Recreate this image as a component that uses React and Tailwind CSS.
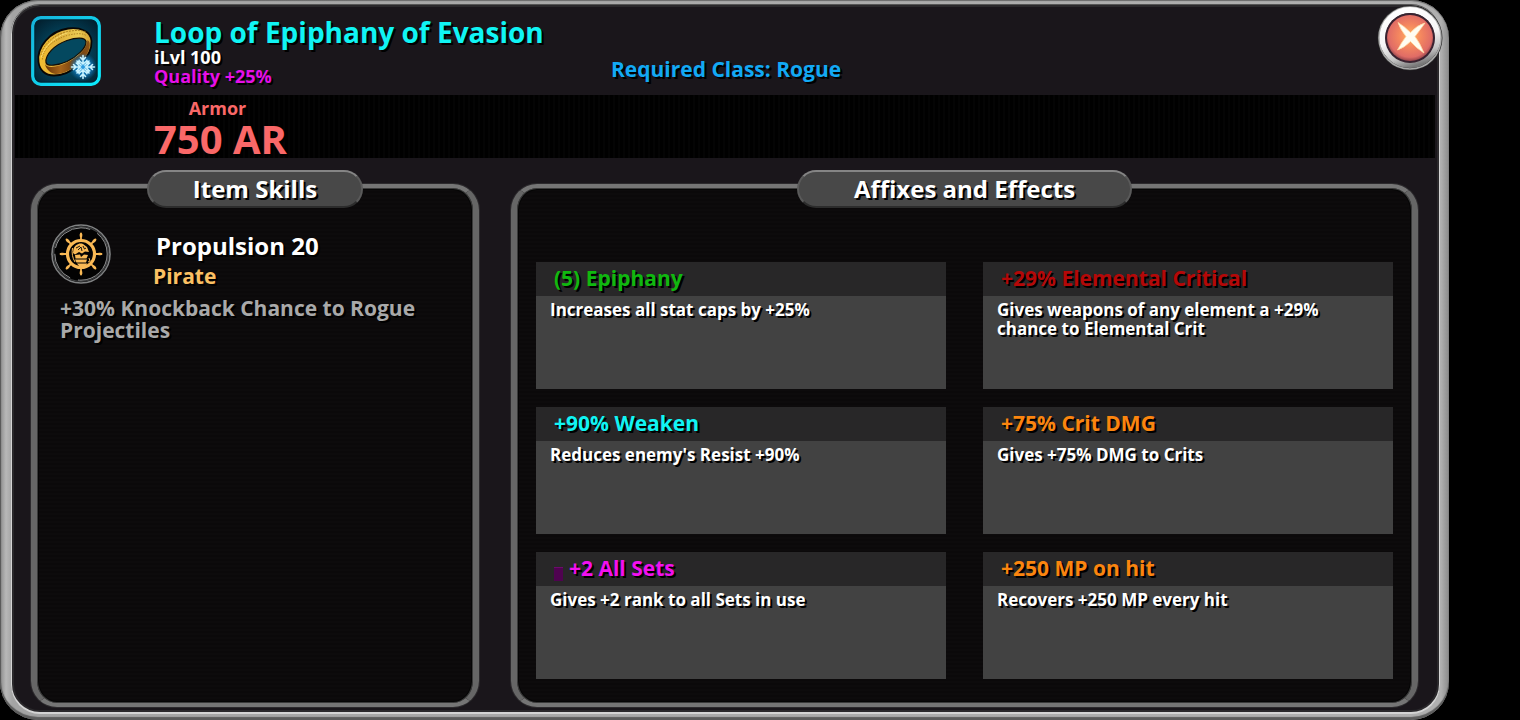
import clsx from 'clsx'

const AFFIXES = [
  { title: '(5) Epiphany', text: 'Increases all stat caps by +25%', color: 'text-[#10b810]' },
  { title: '+29% Elemental Critical', text: 'Gives weapons of any element a +29% chance to Elemental Crit', color: 'text-[#b40808]' },
  { title: '+90% Weaken', text: "Reduces enemy's Resist +90%", color: 'text-[#10f4f4]' },
  { title: '+75% Crit DMG', text: 'Gives +75% DMG to Crits', color: 'text-[#fb850f]' },
  { title: '+2 All Sets', text: 'Gives +2 rank to all Sets in use', color: 'text-[#f310f0]', marker: true },
  { title: '+250 MP on hit', text: 'Recovers +250 MP every hit', color: 'text-[#fb850f]' },
]

function RingIcon() {
  return (
    <svg viewBox="0 0 70 70" className="w-[70px] h-[70px]" role="img" aria-label="Ring">
      <defs>
        <radialGradient id="tile" cx="50%" cy="55%" r="65%">
          <stop offset="0" stopColor="#045a72" />
          <stop offset="0.6" stopColor="#033a50" />
          <stop offset="1" stopColor="#02202f" />
        </radialGradient>
        <linearGradient id="edge" x1="0" y1="0" x2="1" y2="1">
          <stop offset="0" stopColor="#16b4dc" />
          <stop offset="0.5" stopColor="#10cdea" />
          <stop offset="1" stopColor="#0cecff" />
        </linearGradient>
        <linearGradient id="gold" x1="0" y1="0" x2="1" y2="0">
          <stop offset="0" stopColor="#f4be30" />
          <stop offset="0.4" stopColor="#deb03a" />
          <stop offset="0.75" stopColor="#edcc54" />
          <stop offset="1" stopColor="#cf9d30" />
        </linearGradient>
        <linearGradient id="inner" x1="0" y1="0" x2="1" y2="0">
          <stop offset="0" stopColor="#6b3507" />
          <stop offset="0.35" stopColor="#a5641a" />
          <stop offset="0.7" stopColor="#6b3a0b" />
          <stop offset="1" stopColor="#8d5418" />
        </linearGradient>
        <radialGradient id="frost">
          <stop offset="0" stopColor="#2ba6ee" />
          <stop offset="0.6" stopColor="#1a86cf" stopOpacity="0.7" />
          <stop offset="1" stopColor="#0d6fb0" stopOpacity="0" />
        </radialGradient>
      </defs>
      <rect x="1.8" y="1.8" width="66.4" height="66.4" rx="8" fill="url(#tile)" stroke="url(#edge)" strokeWidth="3.4" />
      <rect x="4" y="4" width="62" height="62" rx="6" fill="none" stroke="#012433" strokeWidth="1" />
      {/* band: outer face, inner face, hole */}
      <path d="M7.500 46C5.500 31 19 15 37 12.500C49 11 60 15 60.500 25C61 33 57 41 49 48C40 56 32 59.500 23 59.500C14 59.500 8.500 54 7.500 46Z" fill="url(#gold)" stroke="#090604" strokeWidth="1.800" />
      <path d="M14 48C16 53 28 51 37 46C47 41 56 33 56.500 24C61 26 59 37 51 44.500C42 53 34 57.500 25 58C21 58 15 54 14 48Z" fill="url(#inner)" />
      <path d="M15 46.500C14 39 23 29 36 24.500C45 21.500 54 21 55 25.500C55.500 32 46 40.500 36 45.500C27 49.500 16 51 15 46.500Z" fill="#04485f" stroke="#120b05" strokeWidth="1.200" />
      <g fill="none" strokeLinecap="round">
        <path d="M11.500 43C12 33 22 24 36 19.500C46 17 52 17 56 20" stroke="#a87b1c" strokeWidth="1" strokeDasharray="0.500 2.200" />
        <path d="M10 39C12 28 24 18 37 15.500C44 14 51 14 55 16" stroke="#a87b1c" strokeWidth="1" strokeDasharray="1 2" />
        <path d="M10.500 41C13 31 23 21 36 17" stroke="#fbe27c" strokeWidth="1" strokeDasharray="2 1.500" />
      </g>
      <circle cx="52" cy="51" r="14" fill="url(#frost)" />
      <g stroke="#c9f3ff" strokeWidth="1.600" strokeLinecap="round" fill="none">
        {[0, 45, 90, 135, 180, 225, 270, 315].map((angle) => (
          <path
            key={angle}
            transform={`rotate(${angle} 52 51)`}
            d={angle % 90 === 0 ? 'M52 51V39.500M49.500 41.500L52 44L54.500 41.500M49 45.500L52 48L55 45.500' : 'M52 51V42.500M50 43.500L52 45.500L54 43.500'}
          />
        ))}
      </g>
      <circle cx="52" cy="51" r="2" fill="#2b9be0" />
    </svg>
  )
}

function HelmIcon() {
  return (
    <svg viewBox="0 0 60 60" className="w-[60px] h-[60px]" role="img" aria-label="Pirate">
      <circle cx="30" cy="30" r="29" fill="#030303" stroke="#808283" strokeWidth="1.600" />
      <circle cx="30" cy="30" r="27.400" fill="none" stroke="#3c3d3e" strokeWidth="1.400" />
      <circle cx="30" cy="30" r="26.200" fill="none" stroke="#a0a2a3" strokeWidth="0.900" strokeDasharray="44 8 30 6" />
      <g stroke="#f9b955" fill="none">
        <circle cx="30" cy="30" r="13.500" strokeWidth="3.200" />
        {[0, 45, 90, 135, 180, 225, 270, 315].map((angle) => (
          <path key={angle} transform={`rotate(${angle} 30 30)`} d="M30 16V9.500" strokeWidth="1.800" strokeLinecap="round" />
        ))}
        {[0, 45, 90, 135, 180, 225, 270, 315].map((angle) => (
          <path key={angle} transform={`rotate(${angle} 30 30)`} d="M30 12V10.500" strokeWidth="2.600" strokeLinecap="round" />
        ))}
      </g>
      {/* ship at the hub */}
      <g fill="#f9b955">
        <path d="M22.500 25C24 21 28 18.500 32 20L36 23L38 28L34 27.500L31 29.500L28 28L24 30.500L22 29Z" />
        <path d="M24 31L29 30.500L30 33L33 30.500L37 31L35.500 34.500H24.500Z" />
        <path d="M24 35.500H36L35 38.500H25.500Z" />
        <path d="M26 39.500H36.500L34.500 42H28Z" />
      </g>
      <g stroke="#030303" strokeWidth="0.900" fill="none">
        <path d="M25 24L29 22M27 26L30 23L31 27M32 22L33.500 25L35 24" />
      </g>
      <path d="M21.500 24C20.500 29 21.500 34 24 38M38 34L39 37L37 38" stroke="#f9b955" strokeWidth="1" fill="none" />
    </svg>
  )
}

function CloseButton() {
  return (
    <button aria-label="Close" className="absolute top-[5px] right-1.5 w-[66px] h-[66px] rounded-full">
      <svg viewBox="0 0 66 66" className="w-[66px] h-[66px]">
        <defs>
          <linearGradient id="chrome" x1="0.35" y1="0" x2="0.65" y2="1">
            <stop offset="0" stopColor="#ffffff" />
            <stop offset="0.5" stopColor="#f6f6f6" />
            <stop offset="0.8" stopColor="#c4c4c4" />
            <stop offset="1" stopColor="#777777" />
          </linearGradient>
          <radialGradient id="red" cx="50%" cy="45%" r="55%">
            <stop offset="0" stopColor="#ffb25e" />
            <stop offset="0.45" stopColor="#f4865f" />
            <stop offset="0.85" stopColor="#e06c66" />
            <stop offset="1" stopColor="#96454c" />
          </radialGradient>
        </defs>
        <circle cx="33" cy="33" r="32.500" fill="#2b2b2b" />
        <circle cx="33" cy="33" r="31" fill="none" stroke="#a9a9a9" strokeWidth="1.600" />
        <circle cx="33" cy="32.500" r="27.500" fill="none" stroke="url(#chrome)" strokeWidth="6" />
        <circle cx="33" cy="33" r="25" fill="#3a2230" />
        <circle cx="33" cy="33" r="23" fill="url(#red)" />
        <path d="M21 17.500Q27 21 33.500 27.500Q40 20 48 18Q43 25 38 31.500Q43 38 47 48Q39 43 33.500 36.500Q27 43 20.500 45Q24 38 29 31.500Q23 24 21 17.500Z" fill="#fffdf2" stroke="#ffd9a0" strokeWidth="0.800" />
      </svg>
    </button>
  )
}

function Panel({ title, pillClass, children }) {
  return (
    <section className="flex flex-col border-x-[6px] border-y-4 border-x-[#666] border-y-[#757575] rounded-[26px] bg-[repeating-linear-gradient(0deg,#0d0b0c_0_2px,#0b090a_2px_4px)] bg-origin-border shadow-[0_0_0_1px_#2c2a2d,inset_0_0_0_1px_#3a3a3a,inset_0_0_0_2px_#050505]">
      <h2
        className={clsx(
          'self-center -mt-[18px] h-[38px] rounded-full bg-[#484848] border-2 border-t-[#858585] border-x-[#5a5a5a] border-b-[#2c2c2c]',
          'text-2xl leading-[34px] font-bold text-center text-white text-shadow-[2px_2px_0_#000]',
          pillClass,
        )}
      >
        {title}
      </h2>
      {children}
    </section>
  )
}

function AffixCard({ title, text, color, marker }) {
  return (
    <article className="flex flex-col min-h-[127px] bg-[#424242]">
      <h3 className={clsx('flex items-center h-[34px] px-[18px] bg-[#282728] text-[21px] font-bold text-shadow-[2px_2px_0_#000]', color)}>
        {marker && <span className="w-[9px] h-[14px] mr-1.5 mt-2.5 bg-[#4f0350] border-t border-[#6d0a6c]" />}
        {title}
      </h3>
      <p className="px-3.5 pt-1 pr-14 text-[17px] leading-[19px] font-bold text-white text-shadow-[2px_2px_0_#000]">{text}</p>
    </article>
  )
}

export default function App() {
  return (
    <div className="min-h-screen flex bg-black pr-[71px] font-['Open_Sans','Noto_Sans',sans-serif]">
      <div className="relative flex-1 flex rounded-[38px] bg-[linear-gradient(90deg,#8a8a8a,#b8b8b8_6px,#a4a4a4_12px,#b0b0b0_calc(100%-8px),#8a8a8a)] pt-[5px] pb-2 pl-3 pr-[10px] shadow-[inset_0_1px_1px_#6a6a6a,inset_0_-3px_1px_#5c5c5c,inset_1px_0_1px_#555]">
        <div className="flex-1 flex flex-col rounded-[28px] bg-[#1a161b] border-2 border-[#2a282b] shadow-[0_1px_0_1px_#d4d4d4,0_0_0_1px_#555]">
          {/* Header */}
          <header className="grid grid-cols-[140px_457px_1fr] h-[88px] pt-[9px]">
            <div className="pl-[17px]">
              <RingIcon />
            </div>
            <div className="whitespace-nowrap font-bold">
              <h1 className="text-[28px] leading-8 text-[#10f4f4] text-shadow-[2px_2px_0_#000]">Loop of Epiphany of Evasion</h1>
              <p className="text-[18px] leading-[19px] text-white text-shadow-[2px_2px_0_#000]">iLvl 100</p>
              <p className="text-[18px] leading-[19px] text-[#e60fe8] text-shadow-[2px_2px_0_#000]">Quality +25%</p>
            </div>
            <p className="pt-[38px] text-[21px] leading-[30px] font-bold text-[#12a9f4] text-shadow-[2px_2px_0_#000]">Required Class: Rogue</p>
          </header>

          {/* Main stat */}
          <div className="flex mr-0.5 ml-px pl-[139px] h-[63px] bg-[repeating-linear-gradient(90deg,#000_0_3px,#040404_3px_5px)]">
            <div className="text-center font-bold text-[#fa6868]">
              <p className="pr-1.5 text-lg leading-[26px]">Armor</p>
              <p className="text-[40px] leading-9 text-shadow-[2px_2px_0_#000]">750 AR</p>
            </div>
          </div>

          <main className="flex-1 grid grid-cols-[448fr_907fr] gap-8 pt-[26px] pr-[19px] pb-[3px] pl-[17px]">
            <Panel title="Item Skills" pillClass="w-[216px]">
              <div className="pl-3.5 pr-9 pt-4">
                <div className="flex gap-[42px]">
                  <HelmIcon />
                  <div className="font-bold">
                    <h3 className="pl-[3px] text-2xl leading-9 pt-1 text-white text-shadow-[2px_2px_0_#000]">Propulsion 20</h3>
                    <p className="text-[21px] leading-6 text-[#fbc063] text-shadow-[2px_2px_0_#000]">Pirate</p>
                  </div>
                </div>
                <p className="pl-[9px] pt-[9px] text-[21px] leading-[22px] font-bold text-[#a9a9a9] text-shadow-[2px_2px_0_#000]">
                  +30% Knockback Chance to Rogue Projectiles
                </p>
              </div>
            </Panel>

            <Panel title="Affixes and Effects" pillClass="w-[335px]">
              <div className="grid grid-cols-2 gap-x-[37px] gap-y-[18px] px-[19px] pt-[54px] pb-6">
                {AFFIXES.map((affix) => (
                  <AffixCard key={affix.title} {...affix} />
                ))}
              </div>
            </Panel>
          </main>
        </div>
        <CloseButton />
      </div>
    </div>
  )
}
